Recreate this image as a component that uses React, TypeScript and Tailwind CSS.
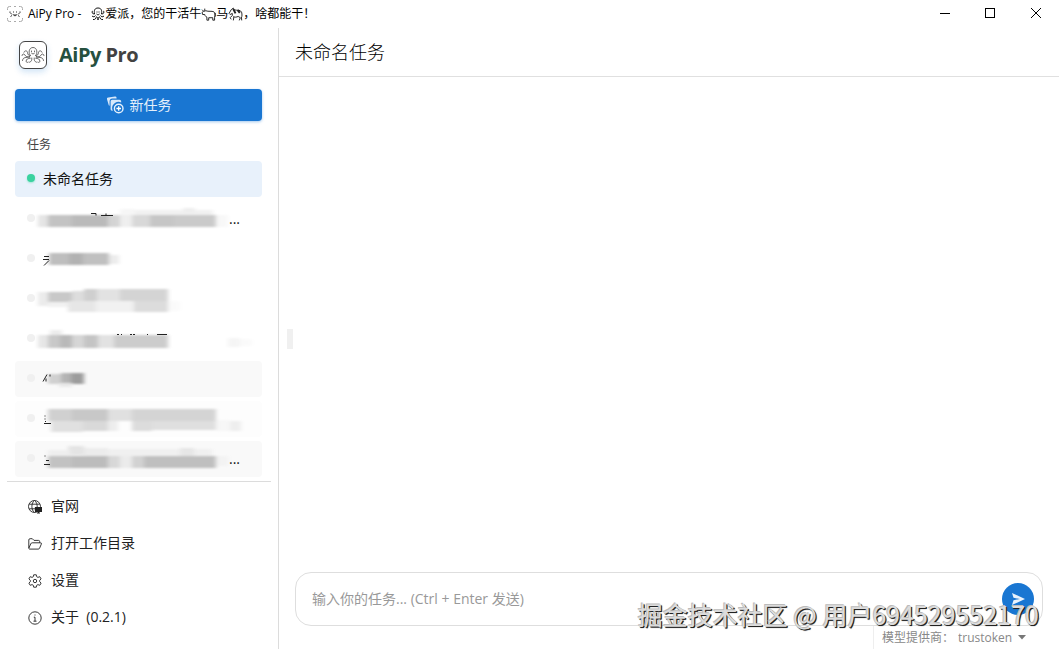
import React from 'react';

type Block = [x: number, y: number, w: number, h: number, fill: string];

interface Task {
  id: number;
  title?: string;
  blocks?: Block[];
  strokes?: string;
  more?: boolean;
  background?: string;
}

const tasks: Task[] = [
  { id: 1, title: '未命名任务', background: 'bg-[#e8f1fb]' },
  {
    id: 2,
    more: true,
    strokes: 'M76 12h5v2M86 14h12M91 12v2',
    blocks: [
      [105, 8, 15, 7, '#f6f6f6'],
      [120, 9, 78, 6, '#f1f1f1'],
      [168, 7, 12, 5, '#eeeeee'],
      [23, 14, 10, 12, '#e4e4e4'],
      [33, 14, 24, 12, '#c3c3c3'],
      [57, 14, 36, 12, '#bababa'],
      [93, 14, 12, 12, '#d4d4d4'],
      [105, 14, 12, 12, '#efefef'],
      [117, 14, 18, 12, '#d8d8d8'],
      [135, 14, 24, 12, '#c6c6c6'],
      [159, 14, 42, 12, '#cacaca'],
      [201, 14, 12, 12, '#f8f8f8'],
    ],
  },
  {
    id: 3,
    strokes: 'M29 15h5M28 18h6M34 19l-5 5',
    blocks: [
      [34, 12, 20, 12, '#bebebe'],
      [54, 12, 14, 12, '#b2b2b2'],
      [68, 12, 26, 12, '#c0c0c0'],
      [94, 14, 10, 9, '#ececec'],
    ],
  },
  {
    id: 4,
    blocks: [
      [23, 11, 10, 14, '#ebebeb'],
      [33, 11, 24, 10, '#c8c8c8'],
      [57, 10, 12, 11, '#dddddd'],
      [69, 8, 13, 12, '#cfcfcf'],
      [82, 8, 23, 12, '#e2e2e2'],
      [105, 8, 48, 12, '#d4d4d4'],
      [33, 21, 20, 5, '#f1f1f1'],
      [53, 20, 28, 11, '#e6e6e6'],
      [81, 20, 38, 11, '#f1f1f1'],
      [119, 20, 34, 11, '#dcdcdc'],
      [153, 20, 12, 10, '#fafafa'],
    ],
  },
  {
    id: 5,
    strokes: 'M102 13h2M106 13h1M115 13h2M118 13h2M132 13h1M142 13h10',
    blocks: [
      [35, 9, 12, 6, '#ececec'],
      [23, 14, 10, 13, '#e6e6e6'],
      [33, 14, 12, 13, '#c8c8c8'],
      [45, 14, 12, 13, '#b9b9b9'],
      [57, 14, 12, 13, '#d6d6d6'],
      [69, 14, 14, 13, '#c4c4c4'],
      [83, 14, 16, 13, '#e2e2e2'],
      [99, 14, 54, 13, '#cccccc'],
      [213, 17, 12, 9, '#f5f5f5'],
      [225, 18, 12, 7, '#fafafa'],
    ],
  },
  {
    id: 6,
    background: 'bg-[#f9f9f9]',
    strokes: 'M32 13l-4 7M31 17v3M35 13v2',
    blocks: [
      [33, 13, 15, 10, '#d0d0d0'],
      [46, 12, 10, 12, '#b4b4b4'],
      [56, 12, 13, 11, '#9c9c9c'],
      [44, 22, 13, 4, '#e8e8e8'],
    ],
  },
  {
    id: 7,
    background: 'bg-[#fdfdfd]',
    strokes: 'M30 14v1M30 17v1M29 22h7M30 20h1',
    blocks: [
      [33, 8, 24, 12, '#d0d0d0'],
      [57, 8, 36, 12, '#c8c8c8'],
      [93, 8, 24, 12, '#e0e0e0'],
      [117, 8, 84, 12, '#d4d4d4'],
      [36, 20, 32, 11, '#e0e0e0'],
      [68, 20, 25, 10, '#d9d9d9'],
      [93, 20, 10, 10, '#ededed'],
      [117, 20, 20, 10, '#dcdcdc'],
      [137, 20, 64, 9, '#dfdfdf'],
      [201, 19, 14, 11, '#f7f7f7'],
      [215, 20, 11, 10, '#eeeeee'],
    ],
  },
  {
    id: 8,
    more: true,
    background: 'bg-[#f9f9f9]',
    strokes: 'M30 14v1M29 23h6M31 19h3',
    blocks: [
      [53, 5, 16, 9, '#e4e4e4'],
      [33, 9, 22, 6, '#eeeeee'],
      [69, 7, 24, 8, '#ececec'],
      [93, 8, 104, 7, '#f0f0f0'],
      [165, 7, 14, 8, '#e6e6e6'],
      [33, 15, 24, 12, '#c2c2c2'],
      [57, 15, 36, 12, '#bcbcbc'],
      [93, 15, 12, 12, '#d8d8d8'],
      [105, 15, 12, 12, '#ebebeb'],
      [117, 15, 12, 12, '#d2d2d2'],
      [129, 15, 72, 12, '#bfbfbf'],
      [201, 15, 12, 10, '#f3f3f3'],
    ],
  },
];

const OctopusIcon: React.FC<{ className?: string }> = ({ className }) => (
  <svg viewBox="0 0 24 18" fill="none" stroke="currentColor" strokeWidth=".8" strokeLinecap="round" className={className}>
    <path d="M9.300 9.500C7.200 7.600 7.600 1.500 12 1.500s4.800 6.100 2.700 8" />
    <path d="M10.500 5v.6M13.500 5v.6M10.500 7.200c.8 1 2.200 1 3 0" />
    <path d="M9.300 9.500C7.500 10 6.800 8.500 6.500 6.500 6.200 4.300 3.500 4.300 3 6.200M8.800 10.500C6.500 11.500 4.500 10.500 3.800 8.800 3 7.300 1 8 1 9.500M8.600 11.200C5 11.500 1.800 11 1.500 14.500M9.300 12.200C7 12.500 4.800 13 5.200 15.500c.2 1 1.200 1.200 2 .7" />
    <path d="M14.700 9.500c1.800.5 2.500-1 2.800-3 .3-2.200 3-2.200 3.500-.3M15.200 10.500c2.300 1 4.300 0 5-1.700.8-1.500 2.800-.8 2.800.7M15.400 11.200c3.600.3 6.800-.2 7.100 3.300M14.700 12.200c2.300.3 4.500.8 4.100 3.300-.2 1-1.200 1.200-2 .7" />
    <path d="M10.800 12c.2 2-.3 3.800-2.300 4.300M13.200 12c-.2 2 .3 3.800 2.300 4.300" />
  </svg>
);

const AppIcon = () => (
  <svg viewBox="0 0 16 16" fill="none" stroke="#333" className="size-4">
    <path d="M.5 4V2.500a2 2 0 0 1 2-2H4M12 .5h1.500a2 2 0 0 1 2 2V4M15.500 12v1.500a2 2 0 0 1-2 2H12M4 15.500H2.500a2 2 0 0 1-2-2V12M7 .5h2M7 15.500h2" stroke="#aaa" />
    <path d="M3 5.500v1l2 2M13 5.500v1l-2 2M3.500 10.500l1.500-1M12.500 10.500l-1.500-1M6.500 5.500v1M9.500 5.500v1M6 8.500l2 1.500 2-1.500M8 8v1" />
  </svg>
);

const OctopusEmoji = () => (
  <svg viewBox="0 0 14 14" fill="none" stroke="#111" className="size-3.5">
    <path d="M3.500 7C2.800 3 4 1 7 1s4.200 2 3.500 6M3.500 7C1 7.500.5 4 1.800 4M10.500 7c2.500.5 3-3 1.700-3M1 9c1.500 1.500 3 .5 3.500-.5M13 9c-1.500 1.500-3 .5-3.500-.5M2 12.500c2 .5 3-1 3.500-3M12 12.500c-2 .5-3-1-3.500-3M6 13c1-.5 1-2 1-3 0 1 0 2.500 1 3" />
    <path d="M5.500 5h1M7.500 5h1M5.500 7c1 1 2 1 3 0" />
  </svg>
);

const OxEmoji = () => (
  <svg viewBox="0 0 14 14" fill="none" stroke="#222" strokeWidth=".9" className="size-[15px]">
    <path d="M1 2.500L2.500 4l2-.5C7 4.500 10 3.500 12 4.500c1.200 1 1.200 3 .7 5v2.800h-1.700V10H7.200v2.300H5.500V9.500C4.300 9 3.600 8 3.500 7L1.500 7 1 5l1.500-1M3.500 1.500v2M13.300 5.500V9" />
  </svg>
);

const HorseEmoji = () => (
  <svg viewBox="0 0 14 14" fill="none" stroke="#222" strokeWidth=".9" className="size-[15px]">
    <path d="M1 6l2-3.500 2-1.500v1.500l3 .5c3-.5 5 1 5 3.500V9M1 6l1 1 2-1L4 8 2 10l1 1.500M5 9c1.500.8 3 .5 4.500-.2L11.500 10l-1 2.500M5.500 9L5 12.500M12.500 9l.3 3.500" />
    <path d="M5 2l2 4M9 3l2 2.500" strokeWidth="1.800" />
  </svg>
);

const TitleBar = () => (
  <header className="flex h-7 shrink-0 items-center justify-between pl-[7px] text-black">
    <div className="flex items-center text-xs">
      <AppIcon />
      <span className="ml-[5px] mr-2.5">AiPy Pro -</span>
      <OctopusEmoji />
      <span>爱派，您的干活牛</span>
      <OxEmoji />
      <span>马</span>
      <HorseEmoji />
      <span>，啥都能干！</span>
    </div>
    <div className="flex h-full">
      <button aria-label="最小化" className="flex w-[45px] items-center justify-center pb-0.5">
        <svg viewBox="0 0 10 10" className="size-2.5" stroke="#000" shapeRendering="crispEdges">
          <path d="M0 5.500h10" />
        </svg>
      </button>
      <button aria-label="最大化" className="flex w-[45px] items-center justify-center pb-0.5">
        <svg viewBox="0 0 10 10" className="size-2.5" fill="none" stroke="#000" shapeRendering="crispEdges">
          <rect x=".5" y=".5" width="9" height="9" />
        </svg>
      </button>
      <button aria-label="关闭" className="flex w-[47px] items-center justify-center pb-0.5">
        <svg viewBox="0 0 10 10" className="size-2.5" stroke="#000">
          <path d="M0 0l10 10M10 0L0 10" />
        </svg>
      </button>
    </div>
  </header>
);

const NewTaskIcon = () => (
  <svg viewBox="0 0 18 18" className="size-[18px]">
    <path d="M2.300 1.500L9 .5a1.300 1.300 0 0 1 1.500 1.100l.1.900H6.500A3 3 0 0 0 3.600 5.500v4.300a1.300 1.300 0 0 1-1-1L1 3.200a1.300 1.300 0 0 1 1.300-1.700z" fill="#d7e8fa" />
    <path d="M6.200 3.700h7.300a1.700 1.700 0 0 1 1.700 1.700v1.200a6.200 6.200 0 0 0-8.400 8.200H6a1.500 1.500 0 0 1-1.400-1.500V5.300a1.600 1.600 0 0 1 1.600-1.600z" fill="#d7e8fa" />
    <circle cx="12.700" cy="12.500" r="4.300" fill="#1976d2" stroke="#e6f1fc" strokeWidth="1.400" />
    <path d="M12.700 10.200v4.600M10.400 12.500H15" stroke="#fff" strokeWidth="1.300" />
  </svg>
);

const TaskRow: React.FC<{ task: Task }> = ({ task }) => (
  <li>
    <button
      aria-label={task.title ?? '历史任务'}
      className={`flex h-9 w-full items-center rounded pl-3 pr-5 text-left text-sm text-[#111] ${task.background ?? ''}`}
    >
      {task.title ? (
        <>
          <span className="mb-0.5 size-2 shrink-0 rounded-full bg-[#3ad29f] shadow-[0_1px_2px_#3ad29f66]" />
          <span className="ml-2 truncate">{task.title}</span>
        </>
      ) : (
        <>
          <span className="mb-0.5 size-2 shrink-0 rounded-full bg-[#f0f0f0]" />
          <svg viewBox="20 0 194 36" className="h-9 w-[194px] shrink-0 overflow-visible">
            <g filter="url(#soften)">
              {task.blocks?.map(([x, y, w, h, fill], i) => (
                <rect key={i} x={x} y={y} width={w} height={h} fill={fill} />
              ))}
            </g>
            <path d={task.strokes} stroke="#222" fill="none" transform="translate(0 .5)" />
          </svg>
          {task.more && <span>...</span>}
        </>
      )}
    </button>
  </li>
);

const GlobeIcon = () => (
  <svg viewBox="0 0 14 14" fill="none" stroke="currentColor" className="size-3.5">
    <circle cx="6.500" cy="6.500" r="6" strokeWidth=".9" />
    <path d="M6.500.5C3 3 3 10 6.500 12.500M6.500.5c2 1.500 2.800 4 2.700 6.500M1.200 4.200h10.600M1.200 8.800H7" strokeWidth=".9" />
    <path d="M7.500 7.500h6v4h-6zM9 13h3M10.500 11v2" fill="currentColor" strokeWidth="1.200" />
  </svg>
);

const FolderIcon = () => (
  <svg viewBox="0 0 14 14" fill="none" stroke="currentColor" strokeWidth=".9" strokeLinejoin="round" className="size-3.5">
    <path d="M.8 11V3a1.300 1.300 0 0 1 1.300-1.300h2.200L6 3.400h4.500a1.200 1.200 0 0 1 1.200 1.200v1.200" />
    <path d="M.8 11.200l2-4.400a1.500 1.500 0 0 1 1.400-1h8.200a1 1 0 0 1 .9 1.400l-1.700 4a1.500 1.500 0 0 1-1.400.9H1.600a.9.9 0 0 1-.8-.9z" />
  </svg>
);

const GearIcon = () => (
  <svg viewBox="0 0 14 14" fill="none" stroke="currentColor" strokeWidth=".9" strokeLinejoin="round" className="size-3.5">
    <path d="M5.700.8h2.600l.4 1.900 1.200.7 1.900-.7 1.300 2.200L11.700 6.300v1.400l1.400 1.400-1.300 2.200-1.900-.7-1.200.7-.4 1.900H5.700l-.4-1.900-1.200-.7-1.900.7L.9 9.100l1.400-1.400V6.300L.9 4.900l1.300-2.200 1.900.7 1.200-.7z" />
    <circle cx="7" cy="7" r="1.700" />
  </svg>
);

const InfoIcon = () => (
  <svg viewBox="0 0 14 14" fill="none" stroke="currentColor" strokeWidth=".9" className="size-3.5">
    <circle cx="7" cy="7" r="6.200" />
    <path d="M5.800 6.200H7v4M5.500 10.200h3M6.500 4h1" />
  </svg>
);

const menuItems = [
  { name: '官网', icon: GlobeIcon },
  { name: '打开工作目录', icon: FolderIcon },
  { name: '设置', icon: GearIcon },
  { name: '关于  (0.2.1)', icon: InfoIcon },
];

const Sidebar = () => (
  <aside className="flex w-[279px] shrink-0 flex-col border-r border-[#dcdcdc]">
    <div className="flex h-[61px] shrink-0 items-center pb-2 pl-[19px]">
      <div className="flex size-7 items-center justify-center rounded-md border border-[#444] bg-white text-[#444] shadow-[0_3px_6px_#1976d233]">
        <OctopusIcon className="w-6" />
      </div>
      <h1 className="ml-3 text-xl font-bold tracking-tight">
        <span className="text-[#26503f]">AiPy</span> <span className="text-[#424242]">Pro</span>
      </h1>
    </div>

    <div className="pl-[15px] pr-4">
      <button className="flex h-8 w-full items-center justify-center gap-1.5 rounded bg-[#1976d2] text-sm text-[#e3effb] shadow-[0_1px_3px_#1976d266]">
        <NewTaskIcon />
        新任务
      </button>
    </div>

    <h2 className="mt-[15px] mb-[7px] pl-[27px] text-xs leading-[18px] text-[#444]">任务</h2>
    <ul className="flex min-h-0 flex-1 flex-col gap-1 overflow-hidden pl-[15px] pr-4">
      {tasks.map((task) => (
        <TaskRow key={task.id} task={task} />
      ))}
    </ul>

    <nav className="mx-[7px] border-t border-[#dcdcdc] pt-1.5 pb-3.5">
      <ul className="flex flex-col gap-px">
        {menuItems.map((item) => (
          <li key={item.name}>
            <button className="flex h-9 w-full items-center gap-[9px] pl-[21px] text-sm text-[#222]">
              <span className="pt-0.5">
                <item.icon />
              </span>
              <span className="whitespace-pre">{item.name}</span>
            </button>
          </li>
        ))}
      </ul>
    </nav>
  </aside>
);

const Composer = () => (
  <form className="px-4" onSubmit={(e) => e.preventDefault()}>
    <div className="flex h-[54px] items-center rounded-2xl border border-[#dedede] pl-4 pr-2">
      <textarea
        rows={1}
        aria-label="任务"
        placeholder="输入你的任务... (Ctrl + Enter 发送)"
        className="h-5 flex-1 resize-none overflow-hidden text-sm leading-5 outline-none placeholder:text-[#999]"
      />
      <button aria-label="发送" className="flex size-8 items-center justify-center rounded-full bg-[#1976d2]">
        <svg viewBox="0 0 14 14" className="size-3.5">
          <path d="M1 1l13 6L1 13l1.500-4.800L9 7 2.500 5.800z" fill="#e8f2fc" />
        </svg>
      </button>
    </div>
  </form>
);

const StatusBar = () => (
  <footer className="flex h-[23px] justify-end">
    <div className="flex items-center border-l border-[#eee] pl-2 pr-[33px] text-xs text-[#888]">
      <label htmlFor="provider">模型提供商：</label>
      <div className="flex items-center gap-1">
        <select id="provider" className="ml-1 w-[56px] appearance-none outline-none">
          <option>trustoken</option>
        </select>
        <svg viewBox="0 0 8 5" className="h-[5px] w-2">
          <path d="M0 0h8L4 4.500z" fill="#777" />
        </svg>
      </div>
    </div>
  </footer>
);

const App: React.FC = () => {
  return (
    <div className="relative flex h-screen flex-col overflow-hidden bg-white font-['Open_Sans','Noto_Sans_CJK_SC',sans-serif]">
      <svg className="absolute size-0">
        <filter id="soften">
          <feGaussianBlur stdDeviation="2 1" />
        </filter>
      </svg>

      <TitleBar />
      <div className="flex min-h-0 flex-1">
        <Sidebar />
        <main className="flex min-w-0 flex-1 flex-col">
          <div className="flex h-[49px] shrink-0 items-center border-b border-[#e0e0e0] pl-4">
            <h2 className="text-lg font-light text-black">未命名任务</h2>
          </div>
          <div className="flex flex-1 items-center pl-2">
            <div className="mt-7 h-5 w-1.5 bg-[#f0f0f0]" />
          </div>
          <Composer />
          <StatusBar />
        </main>
      </div>

      {/* watermark */}
      <div className="pointer-events-none absolute right-5 bottom-[17px] font-['Noto_Sans_CJK_SC',sans-serif] text-[25px] leading-9 text-[#dcdcdc] [text-shadow:-1px_-1px_0_#bbb,1px_1px_0_#222,1px_1px_1px_#444]">
        掘金技术社区 @ 用户694529552170
      </div>
    </div>
  );
};

export default App;
